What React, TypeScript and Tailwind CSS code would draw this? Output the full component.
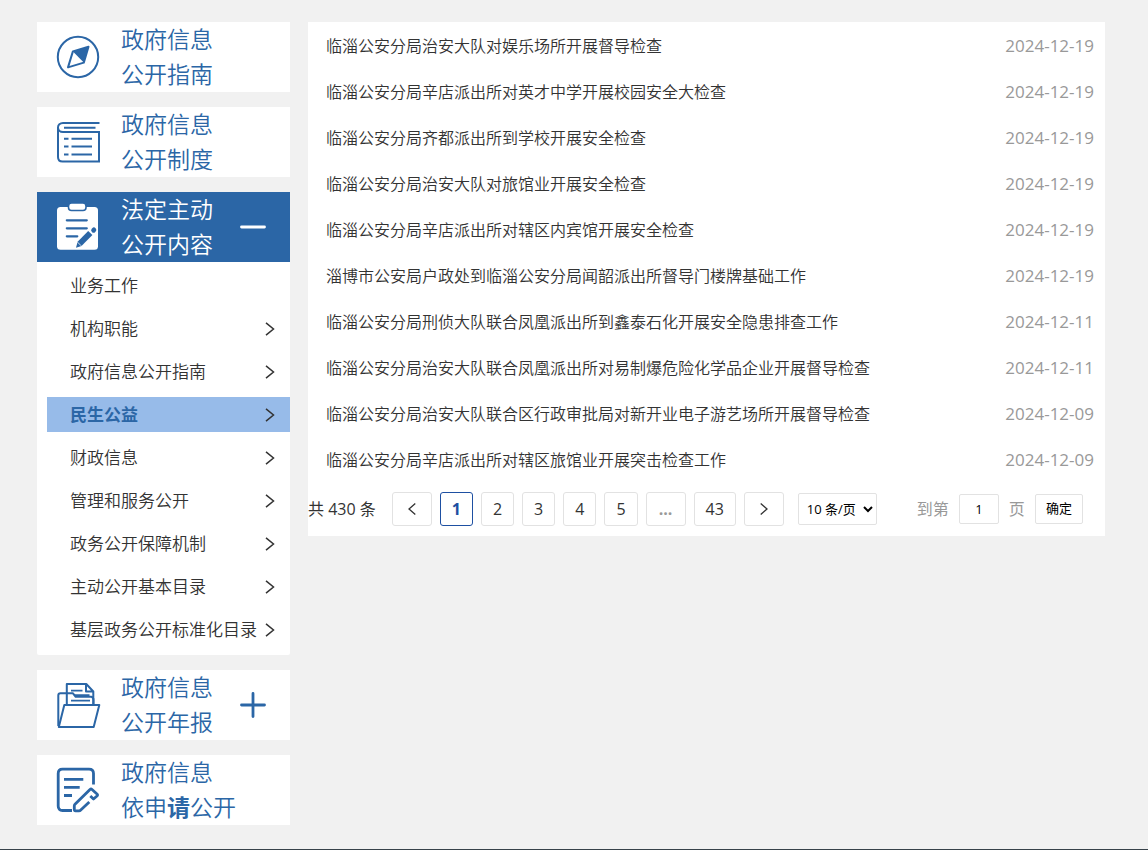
import { useState } from 'react';
import type { ReactNode } from 'react';

const articles = [
    { title: '临淄公安分局治安大队对娱乐场所开展督导检查', date: '2024-12-19' },
    { title: '临淄公安分局辛店派出所对英才中学开展校园安全大检查', date: '2024-12-19' },
    { title: '临淄公安分局齐都派出所到学校开展安全检查', date: '2024-12-19' },
    { title: '临淄公安分局治安大队对旅馆业开展安全检查', date: '2024-12-19' },
    { title: '临淄公安分局辛店派出所对辖区内宾馆开展安全检查', date: '2024-12-19' },
    { title: '淄博市公安局户政处到临淄公安分局闻韶派出所督导门楼牌基础工作', date: '2024-12-19' },
    { title: '临淄公安分局刑侦大队联合凤凰派出所到鑫泰石化开展安全隐患排查工作', date: '2024-12-11' },
    { title: '临淄公安分局治安大队联合凤凰派出所对易制爆危险化学品企业开展督导检查', date: '2024-12-11' },
    { title: '临淄公安分局治安大队联合区行政审批局对新开业电子游艺场所开展督导检查', date: '2024-12-09' },
    { title: '临淄公安分局辛店派出所对辖区旅馆业开展突击检查工作', date: '2024-12-09' },
];

const menuItems = [
    { label: '业务工作', hasChildren: false },
    { label: '机构职能', hasChildren: true },
    { label: '政府信息公开指南', hasChildren: true },
    { label: '民生公益', hasChildren: true },
    { label: '财政信息', hasChildren: true },
    { label: '管理和服务公开', hasChildren: true },
    { label: '政务公开保障机制', hasChildren: true },
    { label: '主动公开基本目录', hasChildren: true },
    { label: '基层政务公开标准化目录', hasChildren: true },
];

function CompassIcon() {
    return (
        <svg width="46" height="50" viewBox="0 0 46 50" fill="none" stroke="currentColor" strokeWidth="2" aria-hidden="true">
            <circle cx="23" cy="25" r="20.2" />
            <path d="M33.5 14.7 17.9 19.4 13 35.4 28.8 30.6Z" strokeLinejoin="round" />
            <path d="M33.5 14.7 17.9 19.4 28.8 30.6Z" fill="currentColor" stroke="none" />
        </svg>
    );
}

function BookIcon() {
    return (
        <svg width="46" height="50" viewBox="0 0 46 50" fill="none" stroke="currentColor" strokeWidth="2" aria-hidden="true">
            <path d="M44.5 6H8C5 6 3 8 3 10.5S5 15 8 15H44V44.5H7.5C5 44.5 3 43 3 40V10.5" />
            <path d="M9 10.7H40.5M9 21.7h4.5M16.5 21.7H37M9 29.5h4.5M16.5 29.5H37M9 37.5h4.5M16.5 37.5H37" />
        </svg>
    );
}

function ClipboardIcon() {
    return (
        <svg width="46" height="50" viewBox="0 0 46 50" fill="none" aria-hidden="true">
            <rect x="2" y="5" width="41" height="42.7" rx="3.5" fill="currentColor" />
            <rect x="13.5" y="1" width="17.5" height="7.5" rx="3" fill="currentColor" stroke="#2b66a6" strokeWidth="1.6" />
            <g stroke="#2b66a6" strokeLinecap="round">
                <path d="M11.8 18.3H31.8M11.8 26.3H31.8M11.8 34.3H22.3" strokeWidth="2.2" />
                <path d="M38.6 28.2 38.9 27.9" strokeWidth="4.8" />
            </g>
            <path d="M33.2 28.9 37.4 33.1 26.5 44 21 45.8 22.6 39.8Z" fill="#2b66a6" />
            <path d="M22.6 40.2 26.2 43.8" stroke="currentColor" strokeWidth="0.8" />
        </svg>
    );
}

function FolderIcon() {
    return (
        <svg width="46" height="50" viewBox="0 0 46 50" fill="none" stroke="currentColor" strokeWidth="2" strokeLinejoin="round" aria-hidden="true">
            <path d="M9.3 25H44.3L38.7 47H3.8Z" />
            <path d="M3.3 46V15.5C3.3 14 4 13.3 5.5 13.3H18L20.7 16.8H36.3C38 17.2 38.5 18.2 38.5 20V25" />
            <path d="M11.8 24.5V4H31.3L38.3 11.5V25M31 4V11.5H38.3" />
            <path d="M16 10.7H27.5M19 15.2H34.5M16 20.7H35" strokeWidth="1.8" />
        </svg>
    );
}

function FormIcon() {
    return (
        <svg width="46" height="50" viewBox="0 0 46 50" fill="none" stroke="currentColor" strokeWidth="2.8" strokeLinejoin="round" aria-hidden="true">
            <path d="M17 45.5H7.5Q3.2 45.5 3.2 41V8.5Q3.2 4.2 7.5 4.2H34Q38.5 4.2 38.5 8.5V19.5" />
            <path d="M9 14.3H28.3M9 22.3H24.7M9 30.5H17" />
            <path d="M34.3 37 25.5 45.3Q25 45.8 24 45.8H20.5Q19.3 45.8 19.3 44.3V41Q19.3 40 20 39.3L35 24.5Q36 23.6 37 24.5L42 29Q43 30 42 31L38.5 34 35.3 31" />
        </svg>
    );
}

function Chevron({ className = '' }: { className?: string }) {
    return (
        <svg width="10" height="14" viewBox="0 0 10 14" fill="none" stroke="currentColor" strokeWidth="1.5" className={className} aria-hidden="true">
            <path d="M1 .8 8.5 7 1 13.2" />
        </svg>
    );
}

function PageArrow({ left = false }: { left?: boolean }) {
    return (
        <svg width="8" height="12" viewBox="0 0 8 12" fill="none" stroke="currentColor" strokeWidth="1.3" aria-hidden="true">
            <path d={left ? 'M7.3 .5 1 6 7.3 11.5' : 'M.7 .5 7 6 .7 11.5'} />
        </svg>
    );
}

interface SectionProps {
    icon: ReactNode;
    lines: [ReactNode, ReactNode];
    active?: boolean;
    toggle?: 'plus' | 'minus';
}

function SectionHeader({ icon, lines, active, toggle }: SectionProps) {
    return (
        <a
            href="#"
            className={`flex h-[70px] items-center pl-[18px] pr-6 ${active ? 'bg-[#2b66a6] text-white' : 'bg-white text-[#2b66a6]'}`}
        >
            {icon}
            <span className="ml-5 flex-1 text-[23px] leading-[35px] font-[350] whitespace-nowrap">
                <span className="block">{lines[0]}</span>
                <span className="block">{lines[1]}</span>
            </span>
            {toggle && (
                <svg width="26" height="26" viewBox="0 0 26 26" fill="none" stroke="currentColor" strokeWidth="2.8" strokeLinecap="round" aria-hidden="true">
                    <path d={toggle === 'plus' ? 'M1.5 13H24.5M13 1.5V24.5' : 'M1.5 13H24.5'} />
                </svg>
            )}
        </a>
    );
}

function Pagination() {
    const [page, setPage] = useState(1);
    const [target, setTarget] = useState('1');
    const box = 'flex h-[34px] items-center justify-center rounded-[3px] border bg-white';

    return (
        <nav className="flex h-[54px] items-center text-base text-[#333]" aria-label="分页">
            <span className="mr-4 whitespace-nowrap">共 430 条</span>
            <div className="flex gap-2">
                <button className={`${box} w-10 border-[#e2e2e2]`} aria-label="上一页" onClick={() => setPage(Math.max(1, page - 1))}>
                    <PageArrow left />
                </button>
                {[1, 2, 3, 4, 5].map((n) => (
                    <button
                        key={n}
                        onClick={() => setPage(n)}
                        className={`${box} ${n === page ? 'px-[11px] border-[#1e50a2] font-bold text-[#1e50a2]' : 'px-[11px] border-[#e2e2e2]'}`}
                    >
                        {n}
                    </button>
                ))}
                <span className={`${box} w-10 border-[#e2e2e2] font-bold text-[#999]`}>...</span>
                <button className={`${box} px-[11px] border-[#e2e2e2]`} onClick={() => setPage(43)}>43</button>
                <button className={`${box} w-10 border-[#e2e2e2]`} aria-label="下一页" onClick={() => setPage(Math.min(43, page + 1))}>
                    <PageArrow />
                </button>
            </div>
            <select aria-label="每页条数" className="ml-[14px] h-8 w-[79px] rounded-xs border border-[#e2e2e2] bg-white pl-1 text-[13px] text-black">
                <option>10 条/页</option>
                <option>20 条/页</option>
                <option>50 条/页</option>
            </select>
            <div className="ml-10 flex items-center whitespace-nowrap text-[#999]">
                <label htmlFor="page-no">到第</label>
                <input
                    id="page-no"
                    value={target}
                    onChange={(e) => setTarget(e.target.value)}
                    className="mx-[10px] h-[30px] w-10 rounded-xs border border-[#e2e2e2] bg-white text-center text-[13px] text-black"
                />
                <span>页</span>
                <button
                    onClick={() => setPage(Number(target) || 1)}
                    className="ml-[10px] h-[30px] rounded-xs border border-[#e2e2e2] bg-white px-[10px] text-[13px] text-black"
                >
                    确定
                </button>
            </div>
        </nav>
    );
}

export default function App() {
    const [activeItem, setActiveItem] = useState('民生公益');

    return (
        <div className="flex min-h-screen flex-col bg-[#f1f1f1] font-['Open_Sans','Noto_Sans_CJK_SC',sans-serif]">
            <div className="flex flex-1 items-start gap-[18px] pt-[22px] pr-[43px] pb-6 pl-[37px]">
                {/* Sidebar */}
                <aside className="flex w-[253px] shrink-0 flex-col gap-[15px]">
                    <SectionHeader icon={<CompassIcon />} lines={['政府信息', '公开指南']} />
                    <SectionHeader icon={<BookIcon />} lines={['政府信息', '公开制度']} />
                    <div>
                        <SectionHeader icon={<ClipboardIcon />} lines={['法定主动', '公开内容']} active toggle="minus" />
                        <ul className="rounded-b-xs bg-white pt-[6px] pl-[10px]">
                            {menuItems.map((item) => {
                                const isActive = item.label === activeItem;
                                return (
                                    <li key={item.label} className="pb-2">
                                        <a
                                            href="#"
                                            onClick={() => setActiveItem(item.label)}
                                            className={`flex h-[35px] items-center justify-between pr-[15px] pl-[23px] text-[17px] whitespace-nowrap ${isActive ? 'bg-[#97bbe9] font-bold text-[#2b66a6]' : 'font-[350] text-[#333]'}`}
                                        >
                                            {item.label}
                                            {item.hasChildren && <Chevron className="text-[#333]" />}
                                        </a>
                                    </li>
                                );
                            })}
                        </ul>
                    </div>
                    <SectionHeader icon={<FolderIcon />} lines={['政府信息', '公开年报']} toggle="plus" />
                    <SectionHeader icon={<FormIcon />} lines={['政府信息', <>依申<b className="font-bold">请</b>公开</>]} />
                </aside>

                {/* Article list */}
                <main className="min-w-0 flex-1 bg-white">
                    <ul>
                        {articles.map((article) => (
                            <li key={article.title} className="flex h-[46px] items-center justify-between pt-[2px] pr-[11px] pl-[18px]">
                                <a href="#" className="truncate text-base font-[350] text-[#333]">{article.title}</a>
                                <span className="shrink-0 text-[17px] text-[#999]">{article.date}</span>
                            </li>
                        ))}
                    </ul>
                    <Pagination />
                </main>
            </div>
            <footer className="h-px bg-[#37424a]" />
        </div>
    );
}
